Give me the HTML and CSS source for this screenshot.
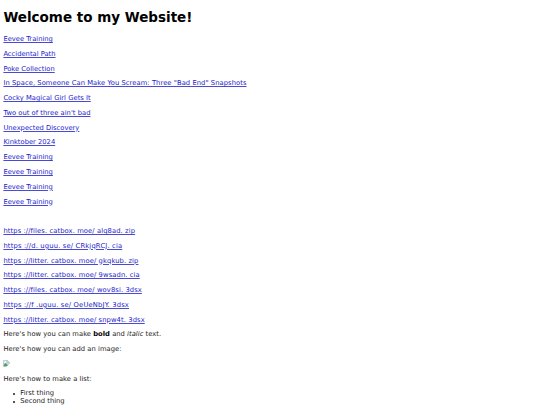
FILE: index.html
```html
<!DOCTYPE html>
<html lang="en">
<head>
  <meta charset="UTF-8">
  <meta name="viewport" content="width=device-width, initial-scale=1.0">
  <title>My Website</title>
  <link rel="stylesheet" href="styles.css">
</head>
<body>
  <h1>Welcome to my Website!</h1>

  <p><a href="#">Eevee Training</a></p>
  <p><a href="#">Accidental Path</a></p>
  <p><a href="#">Poke Collection</a></p>
  <p class="long"><a href="#">In Space, Someone Can Make You Scream: Three "Bad End" Snapshots</a></p>
  <p class="text"><a href="#">Cocky Magical Girl Gets It</a></p>
  <p class="text"><a href="#">Two out of three ain't bad</a></p>
  <p><a href="#">Unexpected Discovery</a></p>
  <p><a href="#">Kinktober 2024</a></p>
  <p><a href="#">Eevee Training</a></p>
  <p><a href="#">Eevee Training</a></p>
  <p><a href="#">Eevee Training</a></p>
  <p><a href="#">Eevee Training</a></p>

  <p><br></p>

  <p class="file"><a href="#">https ://files. catbox. moe/ alq8ad. zip</a></p>
  <p class="file wide"><a href="#">https ://d. uguu. se/ CRkjqRCJ. cia</a></p>
  <p class="file"><a href="#">https ://litter. catbox. moe/ gkqkub. zip</a></p>
  <p class="file"><a href="#">https ://litter. catbox. moe/ 9wsadn. cia</a></p>
  <p class="file"><a href="#">https ://files. catbox. moe/ wov8si. 3dsx</a></p>
  <p class="file wide"><a href="#">https ://f .uguu. se/ OeUeNbJY. 3dsx</a></p>
  <p class="file"><a href="#">https ://litter. catbox. moe/ snpw4t. 3dsx</a></p>

  <p class="text">Here's how you can make <strong>bold</strong> and <em>italic</em> text.</p>

  <p class="text">Here's how you can add an image:</p>
  <p>
    <svg class="picture" viewBox="0 0 16 16">
      <path d="M1 1h9l5 5v9H1z" fill="#c3d5f5" stroke="#a0a0a0"/>
      <path d="M10 1v5h5z" fill="#fff" stroke="#a0a0a0"/>
      <circle cx="5" cy="5" r="2" fill="#fff"/>
      <path d="M2 14v-3l4-4 7 7z" fill="#4ca64c"/>
      <path d="M7 16l9-8v8z" fill="#fff"/>
    </svg>
  </p>

  <p class="text">Here's how to make a list:</p>
  <ul>
    <li>First thing</li>
    <li>Second thing</li>
  </ul>
</body>
</html>
```

FILE: styles.css
```css
html {
  overflow: hidden;
}

body {
  margin: 0 3.375px;
  background-color: white;
  color: #1c1c1c;
  font-family: Verdana, "DejaVu Sans", sans-serif;
  font-size: 6.75px;
  line-height: 8px;
}

h1 {
  margin: 9.2px 0 9.9px;
  color: black;
  font-size: 13.5px;
  line-height: 16px;
}

p {
  margin: 6.77px 0;
}

a {
  color: #1c1ccc;
  text-decoration-color: #4a4ad8;
}

strong {
  color: black;
}

.text {
  letter-spacing: 0.03px;
}

.long {
  letter-spacing: 0.065px;
}

.file {
  letter-spacing: 0.1px;
}

.file.wide {
  letter-spacing: 0.17px;
}

/* Image placeholder */
.picture {
  display: block;
  width: 7px;
  height: 7px;
  padding-bottom: 1px;
}

ul {
  margin: 6.75px 0 0;
  padding-left: 16.875px;
  list-style: none;
}

li {
  display: flex;
  align-items: center;
}

li::before {
  content: "";
  width: 2px;
  height: 2px;
  margin: 1px 5.4px 0 -7.4px;
  border-radius: 50%;
  background-color: #1c1c1c;
}
```
